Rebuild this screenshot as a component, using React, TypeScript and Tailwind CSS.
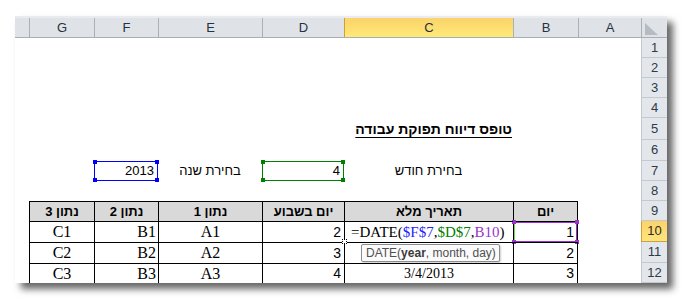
import type { ReactNode } from 'react'

const W = ['w-[14px]', 'w-[65px]', 'w-[64px]', 'w-[104px]', 'w-[82px]', 'w-[169px]', 'w-[65px]', 'w-[63px]']

function Cell({ w, className = '', children }: { w: string; className?: string; children?: ReactNode }) {
  return <div className={`${w} relative flex shrink-0 items-center ${className}`}>{children}</div>
}

function Label({ n, active = false }: { n: number; active?: boolean }) {
  return (
    <div
      className={`flex w-[26px] shrink-0 items-center justify-center border-b border-l text-[13px] font-normal ${
        active
          ? 'border-[#c9a23e] bg-gradient-to-b from-[#fbd36a] to-[#ffe57c] text-[#2a2a2a]'
          : 'border-[#c3c9d0] bg-[#e3e7eb] text-[#2d3a4a]'
      }`}
    >
      {n}
    </div>
  )
}

function Empty({ h, n }: { h: string; n: number }) {
  return (
    <div className={`flex ${h}`}>
      <div className="flex-1" />
      <Label n={n} />
    </div>
  )
}

const tc = 'border-l border-t border-black'
const serif = "font-['Liberation_Serif','Times_New_Roman',serif] text-[16px] text-black"
const num = 'justify-end pr-[3px] text-[14px] text-black'

export default function App() {
  return (
    <div className="h-[298px] w-[682px] bg-white pl-[15px] pt-[16px] font-['Liberation_Sans',Arial,sans-serif]">
      <div className="h-[267px] w-[652px] overflow-hidden bg-white shadow-[6px_6px_7px_rgba(0,0,0,0.6)]">
        <div className="h-[2px] bg-[#e9ebee]" />

        {/* column headers */}
        <div className="flex h-[20px] border-b border-[#a7aeb6] text-[13px] text-[#27313d]">
          <Cell w={W[0]} className="bg-[#dfe3e8]" />
          {['G', 'F', 'E', 'D'].map((c, i) => (
            <Cell key={c} w={W[i + 1]} className="justify-center border-l border-[#aab0b7] bg-[#dfe3e8]">
              {c}
            </Cell>
          ))}
          <Cell w={W[5]} className="justify-center border-l border-[#c9a23e] bg-gradient-to-b from-[#fbd36a] to-[#ffe977]">
            C
          </Cell>
          <Cell w={W[6]} className="justify-center border-l border-[#aab0b7] bg-[#dfe3e8]">
            B
          </Cell>
          <Cell w={W[7]} className="justify-center border-l border-[#aab0b7] bg-[#dfe3e8]">
            A
          </Cell>
          <div className="w-[26px] shrink-0 border-l border-[#aab0b7] bg-[#dfe3e8] pl-[3px] pt-[5px]">
            <svg width="13" height="12" viewBox="0 0 13 12">
              <polygon points="0,0 0,12 13,12" fill="#b6bbc2" />
            </svg>
          </div>
        </div>

        <Empty h="h-[20px]" n={1} />
        <Empty h="h-[20px]" n={2} />
        <Empty h="h-[20px]" n={3} />
        <Empty h="h-[20px]" n={4} />

        {/* title */}
        <div className="flex h-[22px]">
          <Cell w={W[0]} />
          <Cell w={W[1]} />
          <Cell w={W[2]} />
          <Cell w={W[3]} />
          <Cell w={W[4]} />
          <Cell w={W[5]} className="justify-end">
            <span dir="rtl" className="whitespace-nowrap pr-px text-[14px] font-bold text-black underline underline-offset-[3px]">
              טופס דיווח תפוקת עבודה
            </span>
          </Cell>
          <div className="flex-1" />
          <Label n={5} />
        </div>

        <Empty h="h-[21px]" n={6} />

        {/* selection row */}
        <div className="flex h-[20px] text-[13px] text-black">
          <Cell w={W[0]} />
          <Cell w={W[1]} />
          <Cell w={W[2]} className="justify-end border border-[#0000ff] pr-[3px]">
            2013
            <span className="absolute -left-[2px] -top-[2px] size-[4px] bg-[#0000ff]" />
            <span className="absolute -right-[2px] -top-[2px] size-[4px] bg-[#0000ff]" />
            <span className="absolute -bottom-[2px] -left-[2px] size-[4px] bg-[#0000ff]" />
            <span className="absolute -bottom-[2px] -right-[2px] size-[4px] bg-[#0000ff]" />
          </Cell>
          <Cell w={W[3]} className="justify-center">
            <span dir="rtl">בחירת שנה</span>
          </Cell>
          <Cell w={W[4]} className="justify-end border border-[#008000] pr-[3px]">
            4
            <span className="absolute -left-[2px] -top-[2px] size-[4px] bg-[#008000]" />
            <span className="absolute -right-[2px] -top-[2px] size-[4px] bg-[#008000]" />
            <span className="absolute -bottom-[2px] -left-[2px] size-[4px] bg-[#008000]" />
            <span className="absolute -bottom-[2px] -right-[2px] size-[4px] bg-[#008000]" />
          </Cell>
          <Cell w={W[5]} className="justify-center">
            <span dir="rtl">בחירת חודש</span>
          </Cell>
          <div className="flex-1" />
          <Label n={7} />
        </div>

        <Empty h="h-[20px]" n={8} />

        {/* table header */}
        <div className="flex h-[20px] text-[13px] font-bold text-black">
          <Cell w={W[0]} />
          {['נתון 3', 'נתון 2', 'נתון 1', 'יום בשבוע', 'תאריך מלא'].map((t, i) => (
            <Cell key={t} w={W[i + 1]} className={`${tc} justify-center bg-[#d9d9d9]`}>
              <span dir="rtl">{t}</span>
            </Cell>
          ))}
          <Cell w={W[6]} className={`${tc} justify-center border-r bg-[#d9d9d9]`}>
            <span dir="rtl">יום</span>
          </Cell>
          <div className="flex-1" />
          <Label n={9} />
        </div>

        {/* row 10 */}
        <div className="flex h-[21px]">
          <Cell w={W[0]} />
          <Cell w={W[1]} className={`${tc} ${serif} justify-center`}>C1</Cell>
          <Cell w={W[2]} className={`${tc} ${serif} justify-end pr-[2px]`}>B1</Cell>
          <Cell w={W[3]} className={`${tc} ${serif} justify-center`}>A1</Cell>
          <Cell w={W[4]} className={`${tc} ${num}`}>2</Cell>
          <Cell w={W[5]} className={`${tc} z-10 pl-[6px] font-['Liberation_Serif','Times_New_Roman',serif] text-[15px] text-black`}>
            <span className="whitespace-nowrap">
              =DATE(<span className="text-[#1f1fff]">$F$7</span>,<span className="text-[#008000]">$D$7</span>,
              <span className="text-[#9933cc]">B10</span>)
            </span>
            <span className="absolute -bottom-[2px] -left-[3px] size-[5px] border border-dotted border-black bg-white" />
            <div className="absolute left-[16px] top-[22px] flex h-[18px] w-[139px] items-center rounded-[2px] border border-[#8c8c8c] bg-[#fbfbfb] pl-[4px] font-['Liberation_Sans',Arial,sans-serif] text-[12px] text-[#505050] shadow-[1px_1px_2px_rgba(0,0,0,0.2)]">
              DATE(<b className="text-[#3a3a3a]">year</b>, month, day)
            </div>
          </Cell>
          <Cell w={W[6]} className={`${tc} ${num} border-r`}>
            1
            <span className="absolute inset-0 border border-[#9933cc] border-l-[#7ad65a]" />
            <span className="absolute -left-[2px] -top-[2px] size-[4px] bg-[#9933cc]" />
            <span className="absolute -right-[2px] -top-[2px] size-[4px] bg-[#9933cc]" />
            <span className="absolute -bottom-[2px] -left-[2px] size-[4px] bg-[#9933cc]" />
            <span className="absolute -bottom-[2px] -right-[2px] size-[4px] bg-[#9933cc]" />
          </Cell>
          <div className="flex-1" />
          <Label n={10} active />
        </div>

        {/* row 11 */}
        <div className="flex h-[21px]">
          <Cell w={W[0]} />
          <Cell w={W[1]} className={`${tc} ${serif} justify-center`}>C2</Cell>
          <Cell w={W[2]} className={`${tc} ${serif} justify-end pr-[2px]`}>B2</Cell>
          <Cell w={W[3]} className={`${tc} ${serif} justify-center`}>A2</Cell>
          <Cell w={W[4]} className={`${tc} ${num}`}>3</Cell>
          <Cell w={W[5]} className={tc} />
          <Cell w={W[6]} className={`${tc} ${num} border-r`}>2</Cell>
          <div className="flex-1" />
          <Label n={11} />
        </div>

        {/* row 12 */}
        <div className="flex h-[20px]">
          <Cell w={W[0]} />
          <Cell w={W[1]} className={`${tc} ${serif} justify-center`}>C3</Cell>
          <Cell w={W[2]} className={`${tc} ${serif} justify-end pr-[2px]`}>B3</Cell>
          <Cell w={W[3]} className={`${tc} ${serif} justify-center`}>A3</Cell>
          <Cell w={W[4]} className={`${tc} ${num}`}>4</Cell>
          <Cell w={W[5]} className={`${tc} font-['Liberation_Serif','Times_New_Roman',serif] justify-center text-[14px] text-black`}>3/4/2013</Cell>
          <Cell w={W[6]} className={`${tc} ${num} border-r`}>3</Cell>
          <div className="flex-1" />
          <Label n={12} />
        </div>
      </div>
    </div>
  )
}
